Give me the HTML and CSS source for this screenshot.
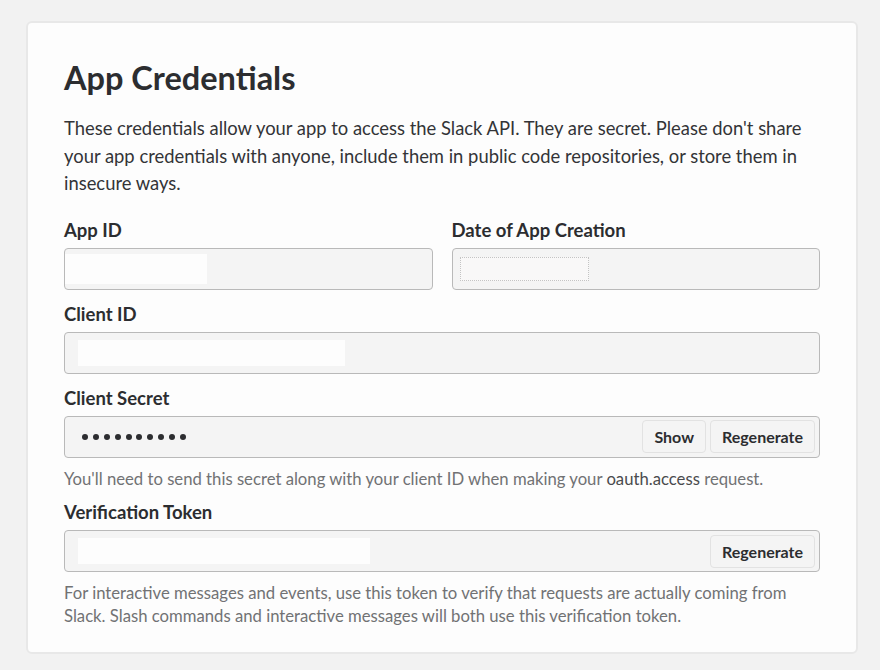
FILE: index.html
```html
<!DOCTYPE html>
<html>
<head>
<meta charset="utf-8">
<link rel="stylesheet" href="styles.css">
</head>
<body>
<div class="card">
  <h2 class="title">App Credentials</h2>
  <p class="intro">These credentials allow your app to access the Slack API. They are secret. Please don't share your app credentials with anyone, include them in public code repositories, or store them in insecure ways.</p>
  <div class="row">
    <div class="field">
      <label class="label">App ID</label>
      <div class="input"><span class="redact r-app"></span></div>
    </div>
    <div class="field">
      <label class="label">Date of App Creation</label>
      <div class="input"><span class="redact r-date"></span></div>
    </div>
  </div>
  <div class="field">
    <label class="label">Client ID</label>
    <div class="input"><span class="redact r-client"></span></div>
  </div>
  <div class="field">
    <label class="label">Client Secret</label>
    <div class="input">
      <span class="dots"><i></i><i></i><i></i><i></i><i></i><i></i><i></i><i></i><i></i><i></i></span>
      <span class="spacer"></span>
      <button class="btn">Show</button>
      <button class="btn">Regenerate</button>
    </div>
    <p class="help">You'll need to send this secret along with your client ID when making your <span class="code">oauth.access</span> request.</p>
  </div>
  <div class="field">
    <label class="label">Verification Token</label>
    <div class="input">
      <span class="redact r-token"></span>
      <span class="spacer"></span>
      <button class="btn">Regenerate</button>
    </div>
    <p class="help">For interactive messages and events, use this token to verify that requests are actually coming from Slack. Slash commands and interactive messages will both use this verification token.</p>
  </div>
</div>
</body>
</html>
```
FILE: styles.css
```css
* { box-sizing: border-box; }
body {
  margin: 0;
  background: #f2f2f2;
  font-family: Lato, "Open Sans", sans-serif;
  color: #2c2d30;
}
.card {
  margin: 21px 0 0 26px;
  width: 832px;
  height: 633px;
  background: #fdfdfd;
  border: 2px solid #e8e8e8;
  border-radius: 6px;
  padding: 35px 36px 0 36px;
}
.title {
  margin: 0;
  font-size: 32.5px;
  font-weight: 700;
  line-height: 40px;
  color: #2c2d30;
}
.intro {
  margin: 17px 0 0;
  font-size: 18.4px;
  line-height: 27.5px;
  color: #333437;
}
.row {
  display: flex;
  gap: 19px;
  margin-top: 8px;
}
.row .field { flex: 1; }
.field {
  margin-top: 11px;
}
.label {
  display: block;
  font-weight: 700;
  font-size: 18.5px;
  line-height: 26px;
  margin-bottom: 5px;
}
.input {
  display: flex;
  align-items: center;
  height: 42px;
  border: 1px solid #b9b9b9;
  border-radius: 4px;
  background: #f4f4f4;
  padding: 0 4px 0 0;
}
.redact {
  display: block;
  background: #fdfdfd;
}
.r-app { width: 142px; height: 30px; margin-left: 0; }
.r-date {
  width: 129px;
  height: 24px;
  margin-left: 7px;
  border: 1px dotted #c4c4c4;
  background: #f9f8f8;
}
.r-client { width: 267px; height: 26px; margin-left: 13px; }
.r-token { width: 292px; height: 26px; margin-left: 13px; }
.dots {
  display: flex;
  gap: 4.9px;
  margin-left: 17px;
}
.dots i {
  display: block;
  width: 6px;
  height: 6px;
  border-radius: 50%;
  background: #2c2d30;
}
.spacer { flex: 1; }
.btn {
  font-family: inherit;
  font-weight: 700;
  font-size: 16px;
  color: #2c2d30;
  background: #f4f4f4;
  border: 1px solid #e2e2e2;
  border-radius: 4px;
  height: 33px;
  padding: 0 11px;
  margin-left: 4px;
}
.help {
  margin: 10px 0 -2.5px;
  font-size: 16.7px;
  line-height: 23px;
  color: #717274;
}
.code {
  color: #4a4b4d;
}
```
